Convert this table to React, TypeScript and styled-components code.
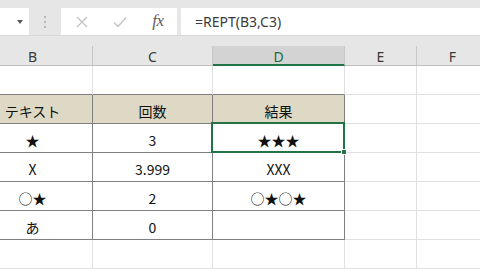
import styled, { createGlobalStyle } from 'styled-components';

const GlobalStyle = createGlobalStyle`
  html, body {
    margin: 0;
    padding: 0;
    background: #ffffff;
    overflow: hidden;
  }
  * {
    box-sizing: border-box;
  }
`;

const Window = styled.div`
  width: 480px;
  height: 270px;
  overflow: hidden;
  background: #ffffff;
`;

const Toolbar = styled.div`
  display: flex;
  align-items: flex-start;
  height: 36px;
  padding-top: 8px;
  background: #e6e6e6;
  border-bottom: 1px solid #d9d9d9;
`;

const NameBox = styled.div`
  width: 29px;
  height: 27px;
  background: #ffffff;
  display: flex;
  align-items: center;
  justify-content: flex-end;
  padding-right: 6px;
`;

const Caret = styled.span`
  width: 0;
  height: 0;
  border-left: 3.5px solid transparent;
  border-right: 3.5px solid transparent;
  border-top: 4px solid #5a5a5a;
`;

const Grip = styled.div`
  width: 32px;
  height: 27px;
  display: flex;
  flex-direction: column;
  align-items: center;
  justify-content: center;
  gap: 3px;

  span {
    width: 2px;
    height: 2px;
    border-radius: 50%;
    background: #a6a6a6;
  }
`;

const FxBox = styled.div`
  width: 116px;
  height: 27px;
  background: #ffffff;
  display: grid;
  grid-template-columns: 38px 38px 38px;
  padding-left: 2px;
  margin-right: 4px;
`;

const FxSlot = styled.div`
  display: flex;
  align-items: center;
  justify-content: center;
`;

const FxLabel = styled.span`
  font-family: 'Liberation Serif', 'DejaVu Serif', serif;
  font-style: italic;
  font-size: 17px;
  color: #5e5e5e;
  letter-spacing: -0.5px;
  margin-top: -1px;
`;

const FormulaInput = styled.div`
  flex: 1;
  height: 27px;
  background: #ffffff;
  padding-left: 14px;
  font-family: 'Noto Sans', 'Open Sans', sans-serif;
  font-size: 14px;
  line-height: 27px;
  color: #3c3c3c;
  white-space: nowrap;
`;

const Gap = styled.div`
  height: 10px;
  background: #e6e6e6;
`;

const Sheet = styled.div`
  margin-left: -27px;
  display: grid;
  grid-template-columns: 120px 120px 132px 72px 72px;
`;

const ColHead = styled.div<{ $active?: boolean }>`
  height: 20px;
  display: flex;
  align-items: center;
  justify-content: center;
  padding-top: 2px;
  font-family: 'Noto Sans', 'Open Sans', sans-serif;
  font-size: 14px;
  color: ${(p) => (p.$active ? '#1e6b41' : '#3a3a3a')};
  background: ${(p) => (p.$active ? '#d3d3d3' : '#e6e6e6')};
  border-right: 1px solid #c6c6c6;
  border-bottom: ${(p) => (p.$active ? '2px solid #217346' : '1px solid #bfbfbf')};
`;

const Cell = styled.div<{ $right: string; $bottom: string; $fill?: string }>`
  position: relative;
  height: 29px;
  display: flex;
  align-items: center;
  justify-content: center;
  padding-top: 3px;
  background: ${(p) => p.$fill || '#ffffff'};
  border-right: 1px solid ${(p) => p.$right};
  border-bottom: 1px solid ${(p) => p.$bottom};
  font-family: 'Noto Sans CJK JP', 'Noto Sans', sans-serif;
  font-size: 14px;
  color: #111111;
  white-space: nowrap;
`;

const Selection = styled.div`
  position: absolute;
  left: -2px;
  top: -2px;
  right: -1px;
  bottom: -1px;
  border: 2px solid #217346;
  z-index: 2;
  pointer-events: none;
`;

const FillHandle = styled.div`
  position: absolute;
  right: -4px;
  bottom: -4px;
  width: 6px;
  height: 6px;
  background: #217346;
  border: 1px solid #ffffff;
`;

const columns = ['B', 'C', 'D', 'E', 'F'];

const rows: string[][] = [
  ['', '', '', '', ''],
  ['テキスト', '回数', '結果', '', ''],
  ['★', '3', '★★★', '', ''],
  ['X', '3.999', 'XXX', '', ''],
  ['○★', '2', '○★○★', '', ''],
  ['あ', '0', '', '', ''],
  ['', '', '', '', ''],
];

const GRID = '#e0e0e0';
const LINE = '#7f7f7f';
const TAN = '#ddd9c4';

function CancelIcon() {
  return (
    <svg width="12" height="12" viewBox="0 0 12 12">
      <path d="M1 1 L11 11 M11 1 L1 11" stroke="#c2c2c2" strokeWidth="1.3" fill="none" />
    </svg>
  );
}

function EnterIcon() {
  return (
    <svg width="14" height="12" viewBox="0 0 14 12">
      <path d="M1 6.5 L5 10.5 L13 1.5" stroke="#c2c2c2" strokeWidth="1.4" fill="none" />
    </svg>
  );
}

export default function App() {
  return (
    <Window>
      <GlobalStyle />
      <Toolbar>
        <NameBox>
          <Caret />
        </NameBox>
        <Grip>
          <span />
          <span />
          <span />
        </Grip>
        <FxBox>
          <FxSlot>
            <CancelIcon />
          </FxSlot>
          <FxSlot>
            <EnterIcon />
          </FxSlot>
          <FxSlot>
            <FxLabel>fx</FxLabel>
          </FxSlot>
        </FxBox>
        <FormulaInput>=REPT(B3,C3)</FormulaInput>
      </Toolbar>
      <Gap />
      <Sheet>
        {columns.map((c) => (
          <ColHead key={c} $active={c === 'D'}>
            {c}
          </ColHead>
        ))}
        {rows.map((row, r) =>
          row.map((text, c) => {
            const inTable = c <= 2;
            const right = inTable && r >= 1 && r <= 5 ? LINE : GRID;
            const bottom = inTable && r <= 5 ? LINE : GRID;
            const fill = r === 1 && inTable ? TAN : undefined;
            return (
              <Cell key={`${r}-${c}`} $right={right} $bottom={bottom} $fill={fill}>
                {text}
                {r === 2 && c === 2 && (
                  <Selection>
                    <FillHandle />
                  </Selection>
                )}
              </Cell>
            );
          })
        )}
      </Sheet>
    </Window>
  );
}
